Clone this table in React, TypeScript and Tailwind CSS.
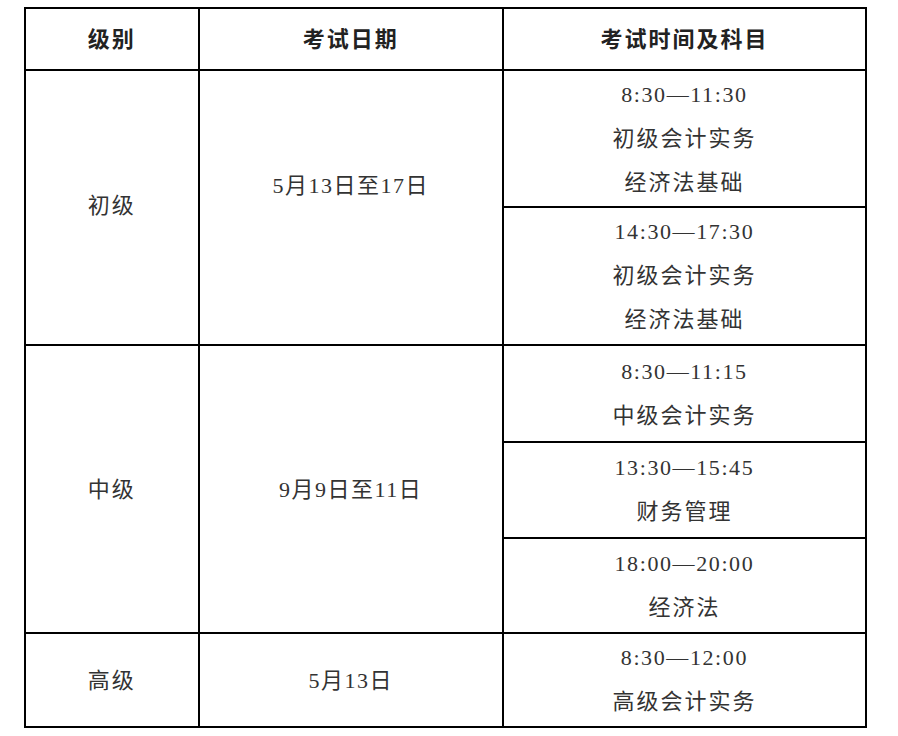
const font = { fontFamily: '"Liberation Serif", "Noto Sans CJK SC", serif' };

type Slot = { time: string; subjects: string[]; h: number };
type Level = { name: string; date: string; lift: boolean; slots: Slot[] };

const levels: Level[] = [
  {
    name: "初级",
    date: "5月13日至17日",
    lift: true,
    slots: [
      { time: "8:30—11:30", subjects: ["初级会计实务", "经济法基础"], h: 137 },
      { time: "14:30—17:30", subjects: ["初级会计实务", "经济法基础"], h: 138 },
    ],
  },
  {
    name: "中级",
    date: "9月9日至11日",
    lift: false,
    slots: [
      { time: "8:30—11:15", subjects: ["中级会计实务"], h: 97 },
      { time: "13:30—15:45", subjects: ["财务管理"], h: 96 },
      { time: "18:00—20:00", subjects: ["经济法"], h: 95 },
    ],
  },
  {
    name: "高级",
    date: "5月13日",
    lift: false,
    slots: [{ time: "8:30—12:00", subjects: ["高级会计实务"], h: 94 }],
  },
];

const cell = "border-2 border-black text-center align-middle";

export default function App() {
  return (
    <div className="w-[898px] h-[736px] bg-white pt-[7px] pl-[24px]" style={font}>
      <table className="border-collapse w-[843px] text-[22px] text-[#333] tracking-[2px]">
        <colgroup>
          <col className="w-[174px]" />
          <col className="w-[305px]" />
          <col className="w-[364px]" />
        </colgroup>
        <thead>
          <tr className="h-[62px]">
            <th className={`${cell} font-bold text-[#222]`}>级别</th>
            <th className={`${cell} font-bold text-[#222]`}>考试日期</th>
            <th className={`${cell} font-bold text-[#222]`}>考试时间及科目</th>
          </tr>
        </thead>
        <tbody>
          {levels.map((lv) =>
            lv.slots.map((s, i) => (
              <tr key={lv.name + i} style={{ height: s.h }}>
                {i === 0 && (
                  <>
                    <td
                      rowSpan={lv.slots.length}
                      className={`${cell} ${lv.lift ? "pb-[4px]" : ""}`}
                    >
                      {lv.name}
                    </td>
                    <td
                      rowSpan={lv.slots.length}
                      className={`${cell} tracking-[1.5px] ${lv.lift ? "pb-[44px]" : ""}`}
                    >
                      {lv.date}
                    </td>
                  </>
                )}
                <td className={`${cell} leading-[44px]`}>
                  <div className="tracking-[1.6px]">{s.time}</div>
                  {s.subjects.map((t) => (
                    <div key={t}>{t}</div>
                  ))}
                </td>
              </tr>
            ))
          )}
        </tbody>
      </table>
    </div>
  );
}
